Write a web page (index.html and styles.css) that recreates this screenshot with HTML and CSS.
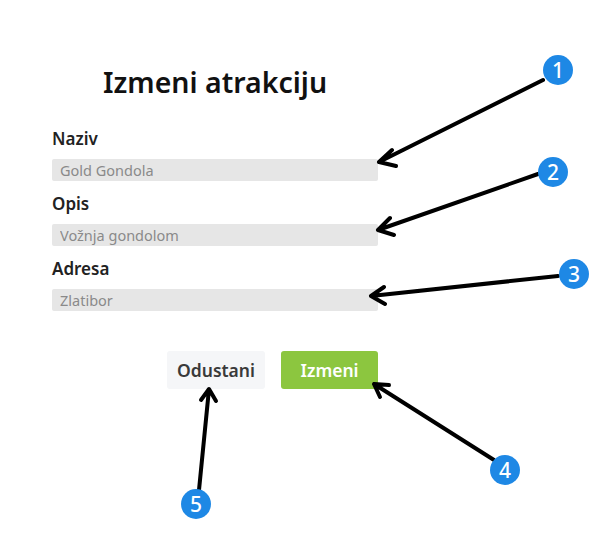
FILE: index.html
```html
<!DOCTYPE html>
<html lang="sr">
<head>
  <meta charset="UTF-8" />
  <meta name="viewport" content="width=device-width, initial-scale=1.0"/>
  <title>Izmeni atrakciju</title>
  <link rel="stylesheet" href="styles.css">
</head>
<body>
<main class="forma">
  <h1>Izmeni atrakciju</h1>
  <label class="polje">
    <span>Naziv</span>
    <input type="text" placeholder="Gold Gondola">
  </label>
  <label class="polje">
    <span>Opis</span>
    <input type="text" placeholder="Vožnja gondolom">
  </label>
  <label class="polje">
    <span>Adresa</span>
    <input type="text" placeholder="Zlatibor">
  </label>
  <div class="dugmad">
    <button class="odustani">Odustani</button>
    <button class="izmeni">Izmeni</button>
  </div>
</main>

<svg class="oznake" width="609" height="538" viewBox="0 0 609 538">
  <g fill="none" stroke="#000" stroke-width="4" stroke-linecap="round" stroke-linejoin="round">
    <path d="M543 80 L379 162 M392 150 L379 162 L396 166"/>
    <path d="M538 174 L378 230 M390 218 L378 230 L394 235"/>
    <path d="M558 276 L371 296 M384 287 L371 296 L385 304"/>
    <path d="M494 460 L374 384 M389 385 L374 384 L380 397"/>
    <path d="M199 490 L209 389 M201 400 L209 389 L216 401"/>
  </g>
  <g fill="#1e88e5">
    <circle cx="558" cy="70" r="15"/>
    <circle cx="553" cy="172" r="15"/>
    <circle cx="574" cy="274" r="15"/>
    <circle cx="505" cy="470" r="15"/>
    <circle cx="196" cy="504" r="15"/>
  </g>
  <g class="broj" fill="#fff" text-anchor="middle">
    <text x="558" y="78">1</text>
    <text x="553" y="180">2</text>
    <text x="574" y="282">3</text>
    <text x="505" y="478">4</text>
    <text x="196" y="512">5</text>
  </g>
</svg>
</body>
</html>
```

FILE: styles.css
```css
    body {
      margin: 0;
      font-family: 'Noto Sans', 'Open Sans', sans-serif;
      background: #fff;
      color: #1a1a1a;
      position: relative;
      width: 609px;
      height: 538px;
      overflow: hidden;
    }
    .forma {
      width: 326px;
      margin-left: 52px;
      padding-top: 62px;
      display: flex;
      flex-direction: column;
    }
    h1 {
      margin: 0 0 25px;
      text-align: center;
      font-size: 28.5px;
      font-weight: 600;
      line-height: 40px;
      color: #111;
    }
    .polje {
      display: flex;
      flex-direction: column;
      gap: 9px;
      margin-bottom: 11px;
    }
    .polje span {
      font-size: 17px;
      font-weight: 600;
      line-height: 23px;
      color: #222;
    }
    .polje input {
      height: 22px;
      box-sizing: border-box;
      border: none;
      border-radius: 2px;
      background: #e6e6e6;
      padding: 0 8px;
      font-family: inherit;
      font-size: 14.5px;
      outline: none;
    }
    .polje input::placeholder { color: #8a8a8a; }
    .dugmad {
      display: flex;
      justify-content: flex-end;
      gap: 16px;
      margin-top: 29px;
    }
    .dugmad button {
      height: 38px;
      padding: 0;
      border: none;
      border-radius: 3px;
      font-family: inherit;
      font-size: 17.5px;
      font-weight: 600;
      cursor: pointer;
    }
    .odustani {
      width: 98px;
      background: #f5f6f8;
      color: #3a3a3a;
    }
    .izmeni {
      width: 97px;
      background: #8cc63f;
      color: #fff;
    }
    .oznake {
      position: absolute;
      left: 0;
      top: 0;
      pointer-events: none;
    }
    .broj text {
      font-family: 'Noto Sans', sans-serif;
      font-size: 21px;
      font-weight: 500;
    }
```
